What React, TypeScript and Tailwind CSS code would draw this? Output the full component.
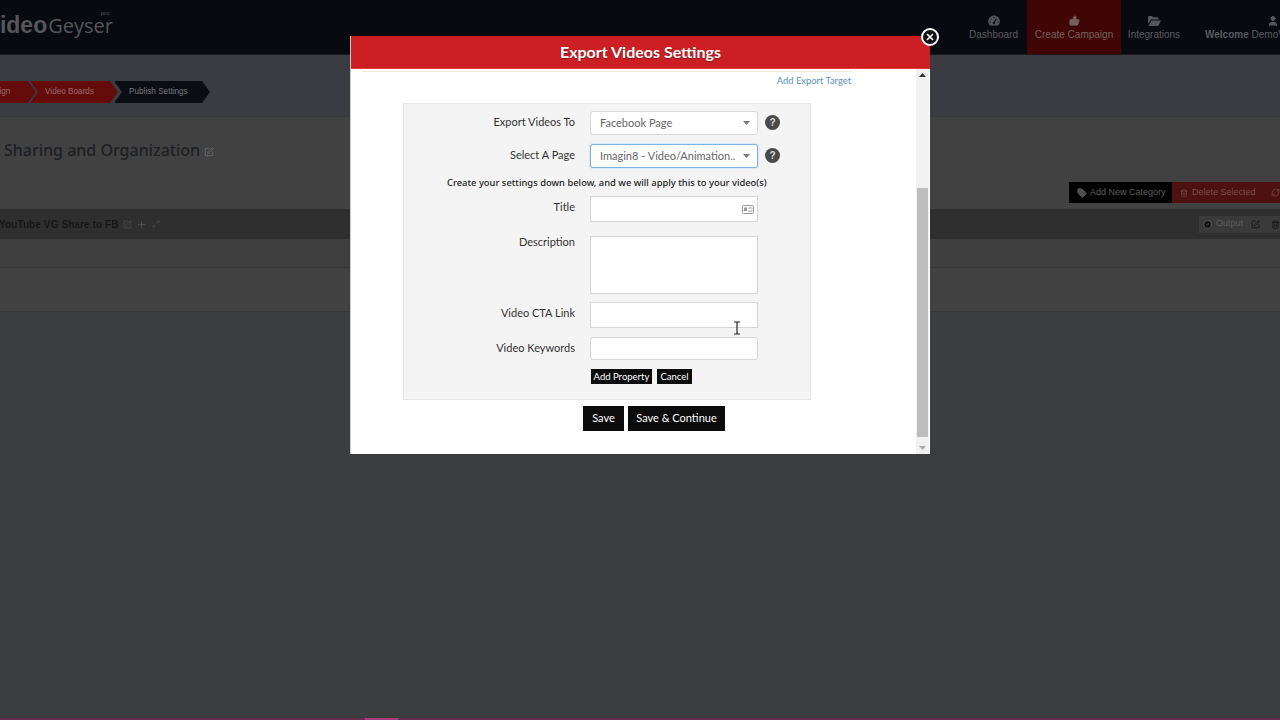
import React from 'react';
import { ThumbsUp, User, SquarePen, Plus, Tag, Trash2, RefreshCw, CircleCheck, X, Maximize2 } from 'lucide-react';

const raleway = "font-['Lato','Noto_Sans',sans-serif]";
const arial = "font-['Liberation_Sans',Arial,sans-serif]";

const NavItem = ({ icon, label, active, width }: { icon: React.ReactNode; label: string; active?: boolean; width: string }) => (
  <div className={`${width} shrink-0 h-full flex flex-col items-center pt-[13px] ${active ? 'bg-[#3f0605] text-[#75605f]' : 'text-[#5a5b5f]'}`}>
    <div className="h-[15px] flex items-center">{icon}</div>
    <span className={`${arial} text-[10px] leading-[14px] whitespace-nowrap`}>{label}</span>
  </div>
);

const GaugeIcon = () => (
  <svg width="12" height="11" viewBox="0 0 12 11">
    <path d="M2 10.5A5.8 5.8 0 1 1 10 10.5z" fill="#55565a" />
    <path d="M6 8L8.5 3.5" stroke="#090a10" strokeWidth="1.2" />
    <circle cx="6" cy="8" r="1.2" fill="#090a10" />
    <circle cx="3" cy="4" r="0.6" fill="#090a10" />
    <circle cx="6" cy="2.4" r="0.6" fill="#090a10" />
    <circle cx="2" cy="7" r="0.6" fill="#090a10" />
    <circle cx="10" cy="7" r="0.6" fill="#090a10" />
  </svg>
);

const FolderIcon = () => (
  <svg width="13" height="10" viewBox="0 0 13 10">
    <path d="M0 1a1 1 0 0 1 1-1h3l1 1.2h4.5a1 1 0 0 1 1 1V3.5H3L0 8z" fill="#55565a" />
    <path d="M3.4 4.4H13l-2.8 5.6H0.6z" fill="#55565a" />
  </svg>
);

const TopBar = () => (
  <div className="h-[55px] shrink-0 bg-[#090a10] border-b border-[#1a1a1c] flex">
    <div className="w-[960px] shrink-0 overflow-hidden relative">
      <div className={`${arial} -ml-[15px] mt-[11px] leading-[28px] text-[#55565a] whitespace-nowrap`}>
        <span className="font-bold text-[23px]">Video</span>
        <span className="font-['Open_Sans',sans-serif] text-[20px] ml-px">Geyser</span>
      </div>
      <span className={`${arial} absolute left-[101px] top-[9px] text-[6px] leading-[8px] text-[#55565a]`}>pro</span>
    </div>
    <NavItem width="w-[67px]" label="Dashboard" icon={<GaugeIcon />} />
    <NavItem width="w-[94px]" label="Create Campaign" active icon={<ThumbsUp size={11} fill="#75605f" />} />
    <NavItem width="w-[66px]" label="Integrations" icon={<FolderIcon />} />
    <div className="shrink-0 h-full pl-[18px] pt-[13px] text-[#5a5b5f] flex flex-col">
      <div className="h-[15px] flex items-center pl-[62px]"><User size={12} fill="#55565a" /></div>
      <span className={`${arial} text-[10px] leading-[14px] whitespace-nowrap`}><b>Welcome</b> DemoVideo</span>
    </div>
  </div>
);

const Crumb = ({ label, dark, width, pad }: { label: string; dark?: boolean; width: string; pad: string }) => (
  <div
    className={`${width} ${pad} h-[22px] shrink-0 flex items-center ${arial} text-[8.2px] whitespace-nowrap [clip-path:polygon(0_0,calc(100%-8px)_0,100%_50%,calc(100%-8px)_100%,0_100%,8px_50%)] ${dark ? 'bg-[#0c0d14] text-[#77787c]' : 'bg-[#640c0c] text-[#9a6a6a]'}`}
  >
    {label}
  </div>
);

const Page = () => (
  <div className="flex-1 flex flex-col overflow-hidden bg-[#3b3d3f]">
    <div className="h-[62px] shrink-0 bg-[#3a3c41] border-b border-[#38393c] flex pt-[26px] overflow-hidden -ml-[40px]">
      <Crumb width="w-[76px]" pad="pl-[13px]" label="Campaign" />
      <Crumb width="w-[88px] -ml-[6px]" pad="pl-[15px]" label="Video Boards" />
      <Crumb dark width="w-[96px] -ml-[4px]" pad="pl-[15px]" label="Publish Settings" />
    </div>
    <div className="h-[92px] shrink-0 bg-[#414141] flex flex-col">
      <div className="flex items-center pt-[22px] pl-[4px]">
        <span className="font-['Noto_Sans',sans-serif] font-medium text-[16px] leading-[22px] text-[#1e2023] whitespace-nowrap">Sharing and Organization</span>
        <SquarePen size={10} className="ml-[4px] mt-[3px] text-[#6a6d72]" />
      </div>
      <div className="flex justify-end mt-[21px]">
        <div className={`w-[103px] h-[21px] bg-[#000] text-[#5f5f5f] ${arial} text-[9px] flex items-center gap-[3px] pl-[8px] whitespace-nowrap`}>
          <Tag size={10} fill="#4d4d4d" /> Add New Category
        </div>
        <div className={`w-[108px] h-[21px] bg-[#4d120f] text-[#7a4d4a] ${arial} text-[9px] flex items-center pl-[8px] whitespace-nowrap`}>
          <Trash2 size={8} className="mr-[4px]" /> Delete Selected
          <RefreshCw size={9} className="ml-[15px]" />
        </div>
      </div>
    </div>
    <div className="h-[30px] shrink-0 bg-[#2f2f2f] flex items-center justify-between">
      <div className="flex items-center -ml-[1px]">
        <span className={`${arial} font-bold text-[10px] tracking-[0.1px] text-[#161719] whitespace-nowrap`}>YouTube VG Share to FB</span>
        <SquarePen size={9} className="ml-[4px] text-[#4a4b4d]" />
        <Plus size={11} className="ml-[4px] text-[#4a4b4d]" />
        <Maximize2 size={8} className="ml-[5px] text-[#4a4b4d]" />
      </div>
      <div className={`w-[81px] h-[17px] bg-[#3a3a3a] flex items-center pl-[4px] ${arial} text-[9px] text-[#5c5c5c]`}>
        <CircleCheck size={9} fill="#111" className="text-[#5c5c5c]" />
        <span className="ml-[4px]">Output</span>
        <SquarePen size={9} className="ml-[8px] text-[#111]" />
        <Trash2 size={9} className="ml-[11px] text-[#111]" />
      </div>
    </div>
    <div className="h-[29px] shrink-0 bg-[#3f3f3f] border-b border-[#383838]" />
    <div className="h-[44px] shrink-0 bg-[#414141] border-b border-[#383838]" />
  </div>
);

const Label = ({ children }: { children: React.ReactNode }) => (
  <label className={`${raleway} block w-[171px] text-right text-[11px] leading-[14px] text-[#333] shrink-0`}>{children}</label>
);

const Select = ({ value, focused }: { value: string; focused?: boolean }) => (
  <div className={`w-[168px] h-[24px] ml-[15px] bg-white rounded-[3px] border flex items-center pl-[9px] pr-[7px] ${focused ? 'border-[#7fb2dd] shadow-[0_0_2px_#9cc4e4]' : 'border-[#d8d8d8]'}`}>
    <span className={`${raleway} text-[11px] text-[#666] flex-1 whitespace-nowrap overflow-hidden`}>{value}</span>
    <svg width="7" height="4" viewBox="0 0 7 4" className="shrink-0 ml-[5px]"><path d="M0 0h7L3.5 4z" fill="#777" /></svg>
  </div>
);

const Help = () => (
  <div className={`${arial} w-[15px] h-[15px] ml-[7px] -mt-[1px] rounded-full bg-[#4a4a4a] text-[#ddd] text-[10px] font-bold flex items-center justify-center`}>?</div>
);

const Field = ({ label, height, mt, labelMt, rounded, children }: { label: string; height: string; mt: string; labelMt: string; rounded?: boolean; children?: React.ReactNode }) => (
  <div className={`flex items-start ${mt}`}>
    <div className={labelMt}><Label>{label}</Label></div>
    <div className={`w-[168px] ${height} ml-[15px] bg-white border border-[#d6d6d6] flex items-center justify-end pr-[3px] ${rounded ? 'rounded-[3px]' : ''}`}>{children}</div>
  </div>
);

const Modal = () => (
  <div className="absolute left-[350px] top-[36px] w-[580px] h-[418px] bg-white flex flex-col border-l border-[#c9c9c9]">
    <div className="h-[33px] shrink-0 bg-[#cc1f24] border-b border-[#e83a3a] flex items-center justify-center">
      <span className={`${raleway} font-bold text-[16px] text-white [text-shadow:0_1px_1px_rgba(0,0,0,0.4)]`}>Export Videos Settings</span>
    </div>
    <div className="flex-1 flex min-h-0">
      <div className="flex-1 flex flex-col">
        <div className="h-[3px] ml-[11px] mr-[64px] border-b border-[#ececec]" />
        <div className={`${raleway} text-[9.4px] leading-[12px] text-[#5d93bd] text-right pr-[65px] mt-[3px]`}>Add Export Target</div>
        <div className="ml-[52px] w-[408px] h-[297px] mt-[16px] bg-[#f4f4f4] border border-[#e6e6e6] flex flex-col pt-[7px]">
          <div className="flex items-center">
            <div className="-mt-[2px]"><Label>Export Videos To</Label></div>
            <Select value="Facebook Page" />
            <Help />
          </div>
          <div className="flex items-center mt-[9px]">
            <div className="-mt-[2px]"><Label>Select A Page</Label></div>
            <Select focused value="Imagin8 - Video/Animation.." />
            <Help />
          </div>
          <p className="font-['Noto_Sans',sans-serif] font-medium text-[9.4px] leading-[14px] text-[#222] pl-[43px] mt-[8px] whitespace-nowrap">
            Create your settings down below, and we will apply this to your video(s)
          </p>
          <Field label="Title" height="h-[26px]" mt="mt-[6px]" labelMt="mt-[4px]">
            <svg width="12" height="9" viewBox="0 0 12 9" fill="none" stroke="#999">
              <rect x="0.5" y="0.5" width="11" height="8" rx="1" />
              <rect x="2" y="2.5" width="3" height="3.5" fill="#999" stroke="none" />
              <path d="M6.5 3h4M6.5 6h4" />
            </svg>
          </Field>
          <Field label="Description" height="h-[58px]" mt="mt-[14px]" labelMt="-mt-[1px]" />
          <Field label="Video CTA Link" height="h-[26px]" mt="mt-[8px]" labelMt="mt-[4px]" />
          <Field label="Video Keywords" height="h-[23px]" mt="mt-[9px]" labelMt="mt-[4px]" rounded />
          <div className="flex gap-[5px] ml-[187px] mt-[9px]">
            <button className={`${raleway} h-[15px] w-[61px] bg-[#0c0c0c] text-white text-[9.5px] leading-[15px]`}>Add Property</button>
            <button className={`${raleway} h-[15px] w-[35px] bg-[#0c0c0c] text-white text-[9.5px] leading-[15px]`}>Cancel</button>
          </div>
        </div>
        <div className="flex gap-[4px] mt-[6px] ml-[232px]">
          <button className={`${raleway} h-[25px] w-[41px] bg-[#0c0c0c] text-white text-[11px]`}>Save</button>
          <button className={`${raleway} h-[25px] w-[97px] bg-[#0c0c0c] text-white text-[11px]`}>Save &amp; Continue</button>
        </div>
      </div>
      <div className="w-[13px] shrink-0 mr-px bg-[#f1f1f1] flex flex-col items-center">
        <div className="h-[12px] flex items-center justify-center shrink-0">
          <svg width="7" height="4" viewBox="0 0 7 4"><path d="M3.5 0L7 4H0z" fill="#333" /></svg>
        </div>
        <div className="flex-1 w-full flex flex-col justify-end">
          <div className="h-[249px] mx-px bg-[#bdbdbd]" />
        </div>
        <div className="h-[12px] flex items-center justify-center shrink-0 mt-[5px]">
          <svg width="7" height="4" viewBox="0 0 7 4"><path d="M0 0h7L3.5 4z" fill="#a8a8a8" /></svg>
        </div>
      </div>
    </div>
  </div>
);

export default function App() {
  return (
    <div className="relative w-[1280px] h-[720px] overflow-hidden flex flex-col bg-[#3b3d3f]">
      <TopBar />
      <Page />
      <div className="h-[2px] shrink-0 bg-[#6b2d4f] flex">
        <div className="ml-[365px] w-[33px] bg-[#a83a80]" />
      </div>
      <Modal />
      <div className="absolute left-[921px] top-[28px] w-[18px] h-[18px] rounded-full bg-[#111] border-2 border-white flex items-center justify-center">
        <X size={10} strokeWidth={4} className="text-white" />
      </div>
      <svg className="absolute left-[733px] top-[321px]" width="8" height="14" viewBox="0 0 8 14" fill="none" stroke="#222" strokeWidth="1.2">
        <path d="M1 1h6M1 13h6M4 1v12" />
      </svg>
    </div>
  );
}
